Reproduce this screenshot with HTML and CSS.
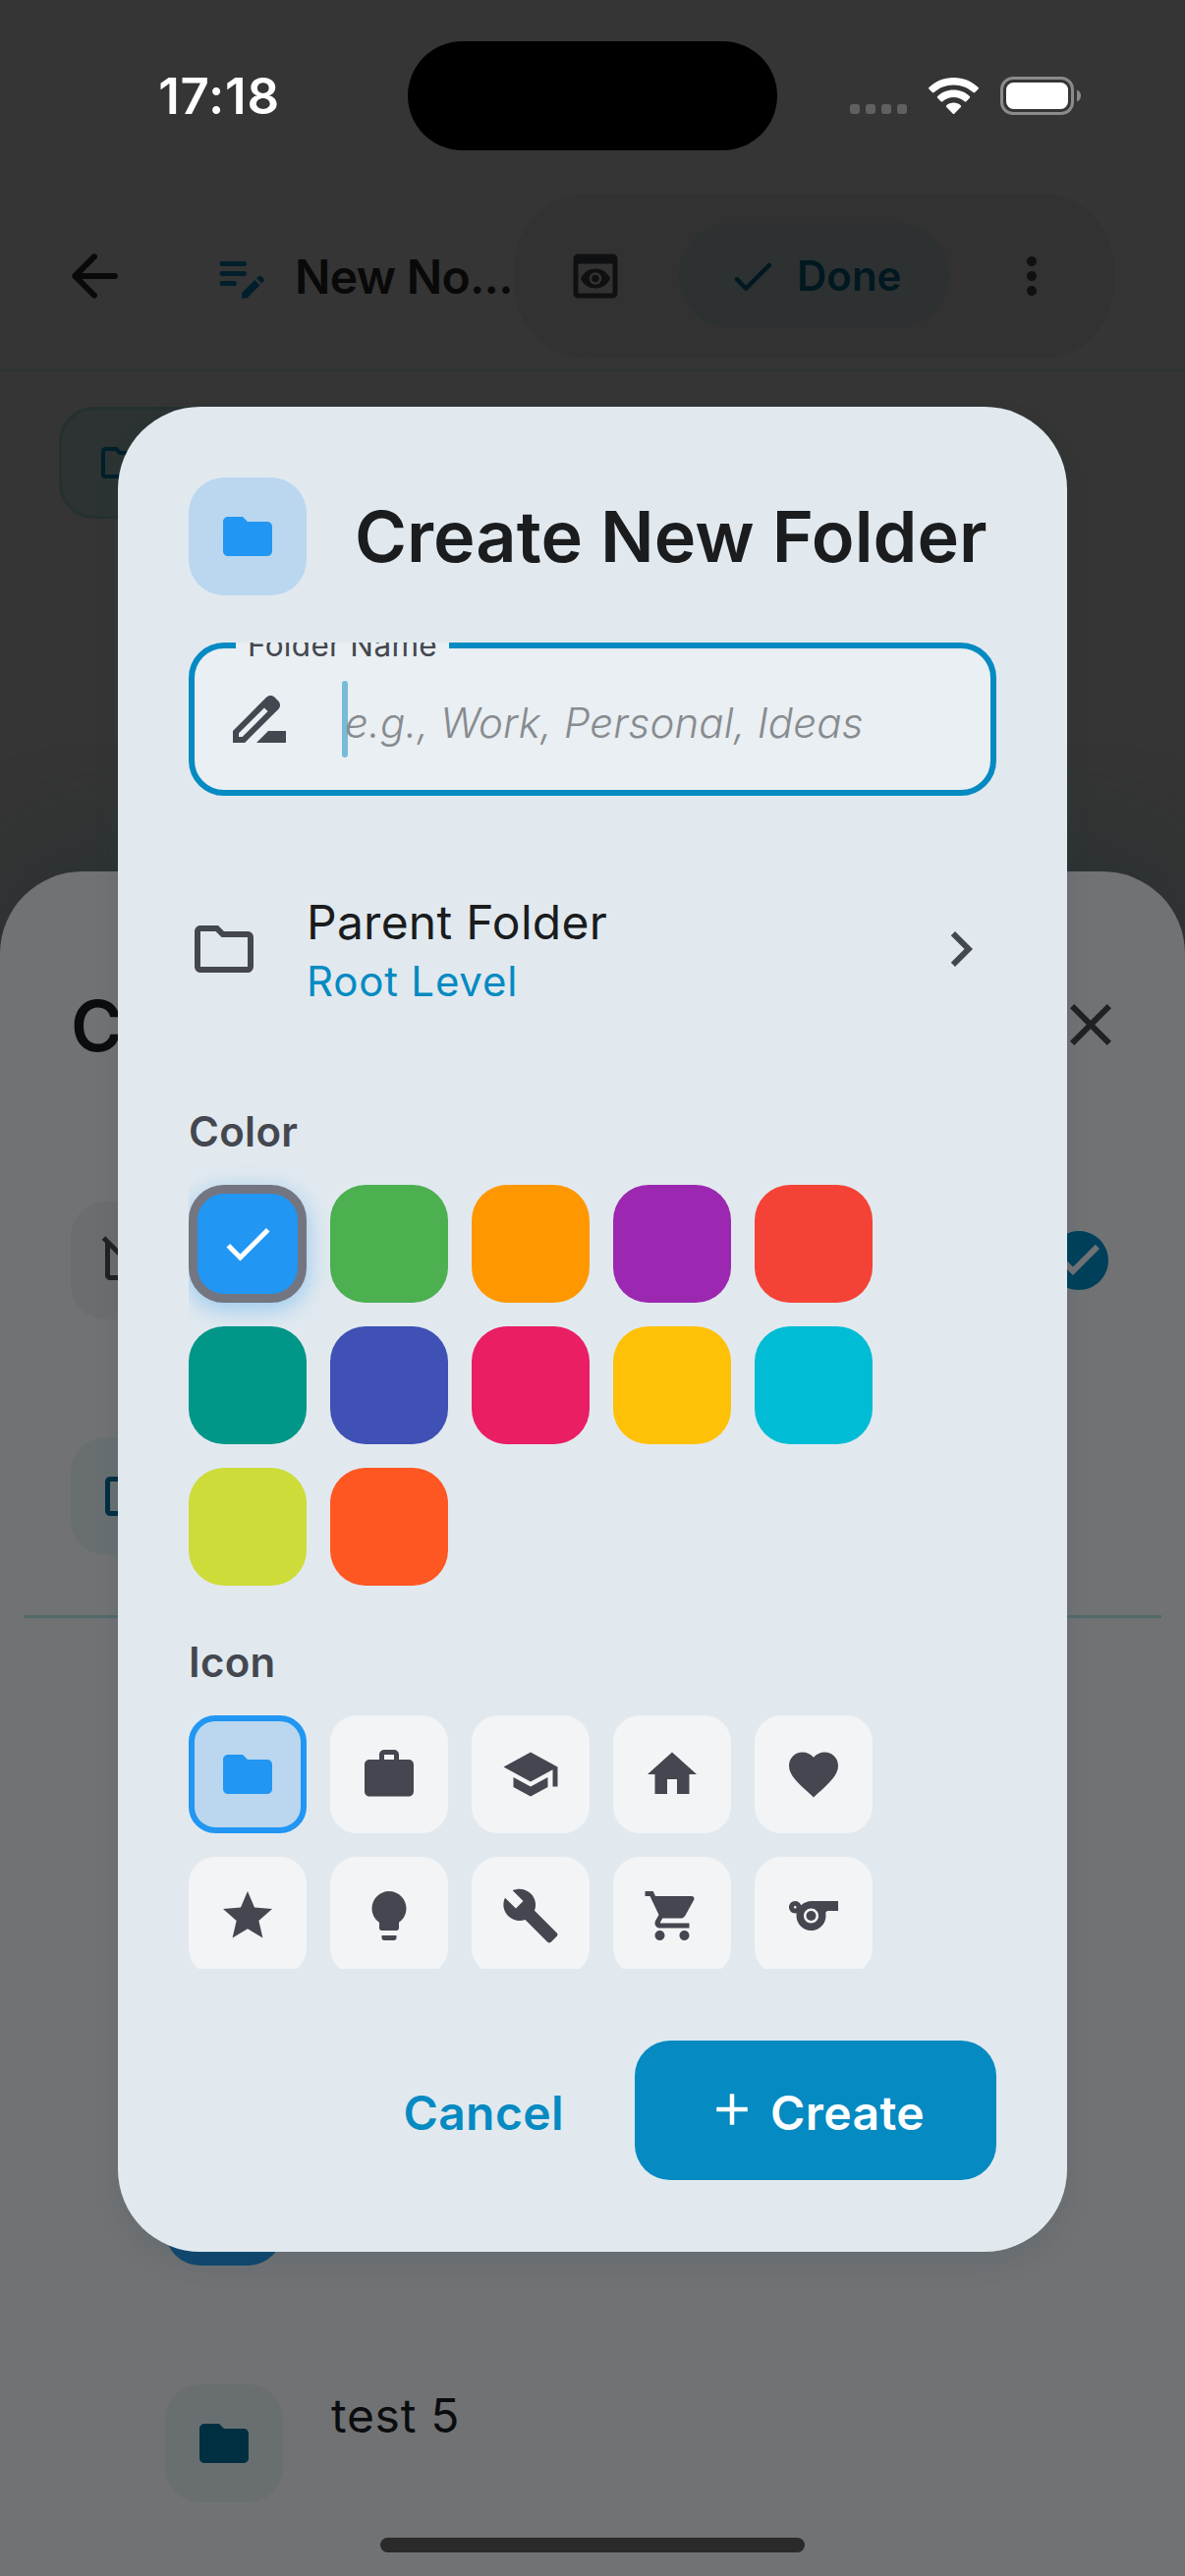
FILE: index.html
```html
<!DOCTYPE html>
<html lang="en">
<head>
<meta charset="utf-8">
<title>Create New Folder</title>
<link rel="stylesheet" href="styles.css">
</head>
<body>
<svg class="defs" aria-hidden="true">
  <symbol id="folder" viewBox="0 0 24 24"><path d="M10 4H4c-1.1 0-1.99.9-1.99 2L2 18c0 1.1.9 2 2 2h16c1.1 0 2-.9 2-2V8c0-1.1-.9-2-2-2h-8l-2-2z"/></symbol>
  <symbol id="folder-outline" viewBox="0 0 24 24"><path d="m9.17 6 2 2H20v10H4V6h5.17M10 4H4c-1.1 0-1.99.9-1.99 2L2 18c0 1.1.9 2 2 2h16c1.1 0 2-.9 2-2V8c0-1.1-.9-2-2-2h-8l-2-2z"/></symbol>
  <symbol id="check" viewBox="0 0 24 24"><path d="M9 16.17 4.83 12l-1.42 1.41L9 19 21 7l-1.41-1.41z"/></symbol>
</svg>

<div class="screen">
  <header class="status-bar">
    <div class="time">17:18</div>
    <div class="island"></div>
    <div class="indicators">
      <div class="cell-dots"><i></i><i></i><i></i><i></i></div>
      <svg class="wifi" viewBox="0 0 51 37"><path d="M25.5 0C35.300 0 44 3.700 50.400 9.800c.7.700.7 1.300.1 1.900l-3.300 3.300c-.6.600-1.200.6-1.800 0C40.200 10.200 33.200 7.400 25.500 7.400S10.800 10.200 5.600 15c-.6.600-1.200.6-1.800 0L.5 11.700c-.6-.6-.6-1.200.1-1.900C7 3.700 15.700 0 25.500 0z"/><path d="M25.500 12.600c6.400 0 12.100 2.400 16.300 6.400.6.600.6 1.200 0 1.800l-3.400 3.400c-.6.600-1.100.6-1.700.1-3-2.700-6.900-4.300-11.200-4.300s-8.200 1.600-11.200 4.300c-.6.500-1.100.5-1.700-.1l-3.400-3.400c-.6-.6-.6-1.200 0-1.800 4.200-4 9.900-6.400 16.300-6.400z"/><path d="M25.500 25.500c2.800 0 5.300 1 7.200 2.700.6.500.6 1.200.1 1.700l-6.300 6.500c-.7.700-1.300.7-2 0l-6.300-6.500c-.5-.5-.5-1.200.1-1.700 1.900-1.700 4.400-2.700 7.200-2.700z"/></svg>
      <svg class="battery" viewBox="0 0 82 39"><rect x="1.500" y="1.500" width="72" height="36" rx="11.500" fill="none" stroke="#8a8b8a" stroke-width="3"/><rect x="6" y="6" width="63" height="27" rx="7.500"/><path fill="#8a8b8a" d="M78 13.500c2.400 1 4 3.300 4 6s-1.600 5-4 6z"/></svg>
    </div>
  </header>

  <div class="app-bar">
    <svg class="icon-72 back" viewBox="0 0 24 24"><path d="M19 11H7.830l4.880-4.880c.39-.39.39-1.030 0-1.420-.39-.39-1.020-.39-1.410 0l-6.590 6.590c-.39.39-.39 1.020 0 1.410l6.590 6.590c.39.39 1.020.39 1.410 0 .39-.39.39-1.020 0-1.410L7.830 13H19c.55 0 1-.45 1-1s-.45-1-1-1z"/></svg>
    <svg class="icon-60 note" viewBox="0 0 24 24"><path d="M14 11c0 .55-.45 1-1 1H4c-.55 0-1-.45-1-1s.45-1 1-1h9c.55 0 1 .45 1 1zM3 7c0 .55.45 1 1 1h9c.55 0 1-.45 1-1s-.45-1-1-1H4c-.55 0-1 .45-1 1zm7 8c0-.55-.45-1-1-1H4c-.55 0-1 .45-1 1s.45 1 1 1h5c.55 0 1-.45 1-1zm8.010-2.130.71-.71c.39-.39 1.020-.39 1.410 0l.71.71c.39.39.39 1.020 0 1.410l-.71.71-2.120-2.120zm-.71.71-5.160 5.160c-.09.09-.14.21-.14.35v1.410c0 .28.22.5.5.500h1.410c.13 0 .26-.05.35-.15l5.160-5.160-2.120-2.110z"/></svg>
    <div class="note-title">New No...</div>
    <div class="tools">
      <svg class="icon-60" viewBox="0 0 24 24"><path d="M19 3H5c-1.110 0-2 .9-2 2v14c0 1.100.89 2 2 2h14c1.100 0 2-.9 2-2V5c0-1.100-.9-2-2-2zm0 16H5V7h14v12zm-5.500-6c0 .83-.67 1.500-1.500 1.500s-1.500-.67-1.500-1.500.67-1.500 1.500-1.500 1.500.67 1.500 1.500zM12 9c-2.730 0-5.060 1.660-6 4 .94 2.340 3.270 4 6 4s5.060-1.660 6-4c-.94-2.340-3.270-4-6-4zm0 6.500c-1.380 0-2.500-1.120-2.500-2.500s1.120-2.500 2.500-2.500 2.500 1.120 2.500 2.500-1.120 2.500-2.500 2.500z"/></svg>
      <div class="done">
        <svg class="icon-54" viewBox="0 0 24 24"><path d="M9 16.170 5.530 12.700c-.39-.39-1.020-.39-1.410 0-.39.39-.39 1.020 0 1.410l4.180 4.180c.39.39 1.020.39 1.410 0L20.290 7.710c.39-.39.39-1.020 0-1.410-.39-.39-1.020-.39-1.410 0L9 16.170z"/></svg>
        <span>Done</span>
      </div>
      <svg class="icon-60" viewBox="0 0 24 24"><path d="M12 8c1.100 0 2-.9 2-2s-.9-2-2-2-2 .9-2 2 .9 2 2 2zm0 2c-1.100 0-2 .9-2 2s.9 2 2 2 2-.9 2-2-.9-2-2-2zm0 6c-1.100 0-2 .9-2 2s.9 2 2 2 2-.9 2-2-.9-2-2-2z"/></svg>
    </div>
  </div>

  <div class="folder-chip"><svg class="icon-48"><use href="#folder-outline"/></svg></div>

  <section class="sheet">
    <div class="sheet-head">
      <h2>C</h2>
      <svg class="icon-72" viewBox="0 0 24 24"><path d="M19 6.410 17.590 5 12 10.590 6.410 5 5 6.410 10.590 12 5 17.590 6.410 19 12 13.410 17.590 19 19 17.590 13.410 12z"/></svg>
    </div>
    <div class="sheet-row">
      <div class="tile tile-plain"><svg class="icon-60" viewBox="0 0 24 24"><path d="M20 6h-8l-2-2H7.170l4 4H20v8.830l1.910 1.910c.06-.24.09-.48.09-.74V8c0-1.100-.9-2-2-2zM2.100 2.100.69 3.510 2 4.820V18c0 1.100.9 2 2 2h13.170l3.310 3.310 1.410-1.410L2.100 2.100zM4 18V6.830L15.170 18H4z"/></svg></div>
      <svg class="icon-72 picked" viewBox="0 0 24 24"><path d="M12 2C6.480 2 2 6.480 2 12s4.480 10 10 10 10-4.480 10-10S17.520 2 12 2zm-2 15-5-5 1.410-1.410L10 14.170l7.590-7.590L19 8l-9 9z"/></svg>
    </div>
    <div class="sheet-row">
      <div class="tile tile-tint"><svg class="icon-60"><use href="#folder-outline"/></svg></div>
    </div>
    <hr class="divider">
    <div class="folder-list">
      <div class="folder-item"><div class="tile tile-blue"></div></div>
      <div class="folder-item"><div class="tile tile-tint"><svg class="icon-60"><use href="#folder"/></svg></div><span>test 5</span></div>
    </div>
    <div class="home-indicator"></div>
  </section>

  <section class="dialog">
    <div class="dialog-head">
      <div class="tile tile-selected"><svg class="icon-60"><use href="#folder"/></svg></div>
      <h1>Create New Folder</h1>
    </div>
    <div class="dialog-body">
      <div class="field">
        <div class="field-label">Folder Name</div>
        <svg class="icon-72" viewBox="0 0 24 24"><path d="M18.410 5.800 17.200 4.590c-.78-.78-2.050-.78-2.830 0l-2.680 2.680L3 15.960V20h4.040l8.740-8.740 2.630-2.630c.79-.78.79-2.050 0-2.830zM6.210 18H5v-1.210l8.660-8.660 1.210 1.210L6.210 18zM11 20l4-4h6v4H11z"/></svg>
        <div class="caret"></div>
        <div class="hint">e.g., Work, Personal, Ideas</div>
      </div>
      <div class="parent">
        <svg class="icon-72"><use href="#folder-outline"/></svg>
        <div class="parent-text">
          <div class="parent-title">Parent Folder</div>
          <div class="parent-value">Root Level</div>
        </div>
        <svg class="icon-72" viewBox="0 0 24 24"><path d="M10 6 8.590 7.410 13.170 12l-4.580 4.590L10 18l6-6z"/></svg>
      </div>
      <h3>Color</h3>
      <div class="grid swatches">
        <div class="swatch blue"><svg class="icon-60"><use href="#check"/></svg></div>
        <div class="swatch green"></div>
        <div class="swatch orange"></div>
        <div class="swatch purple"></div>
        <div class="swatch red"></div>
        <div class="swatch teal"></div>
        <div class="swatch indigo"></div>
        <div class="swatch pink"></div>
        <div class="swatch amber"></div>
        <div class="swatch cyan"></div>
        <div class="swatch lime"></div>
        <div class="swatch deep-orange"></div>
      </div>
      <h3>Icon</h3>
      <div class="grid">
        <div class="choice chosen"><svg class="icon-60"><use href="#folder"/></svg></div>
        <div class="choice"><svg class="icon-60" viewBox="0 0 24 24"><path fill-rule="evenodd" d="M20 6h-4V4c0-1.110-.89-2-2-2h-4c-1.110 0-2 .89-2 2v2H4c-1.110 0-2 .89-2 2v11c0 1.110.89 2 2 2h16c1.110 0 2-.89 2-2V8c0-1.110-.89-2-2-2zm-6 0h-4V4h4v2z"/></svg></div>
        <div class="choice"><svg class="icon-60" viewBox="0 0 24 24"><path d="M5 13.180v4L12 21l7-3.820v-4L12 17l-7-3.820zM12 3 1 9l11 6 9-4.910V17h2V9L12 3z"/></svg></div>
        <div class="choice"><svg class="icon-60" viewBox="0 0 24 24"><path d="M10 20v-6h4v6h5v-8h3L12 3 2 12h3v8z"/></svg></div>
        <div class="choice"><svg class="icon-60" viewBox="0 0 24 24"><path d="m12 21.350-1.450-1.320C5.400 15.360 2 12.280 2 8.500 2 5.420 4.420 3 7.500 3c1.740 0 3.410.81 4.500 2.090C13.090 3.810 14.760 3 16.500 3 19.580 3 22 5.420 22 8.500c0 3.780-3.400 6.860-8.550 11.540L12 21.350z"/></svg></div>
        <div class="choice"><svg class="icon-60" viewBox="0 0 24 24"><path d="M12 17.270 18.180 21l-1.640-7.030L22 9.240l-7.190-.61L12 2 9.190 8.630 2 9.240l5.460 4.730L5.820 21z"/></svg></div>
        <div class="choice"><svg class="icon-60" viewBox="0 0 24 24"><path d="M9 21c0 .55.45 1 1 1h4c.55 0 1-.45 1-1v-1H9v1zm3-19C8.140 2 5 5.140 5 9c0 2.380 1.190 4.470 3 5.740V17c0 .55.45 1 1 1h6c.55 0 1-.45 1-1v-2.260c1.810-1.270 3-3.360 3-5.740 0-3.860-3.140-7-7-7z"/></svg></div>
        <div class="choice"><svg class="icon-60" viewBox="0 0 24 24"><path d="m22.700 19-9.100-9.100c.9-2.300.4-5-1.500-6.900-2-2-5-2.400-7.400-1.300L9 6 6 9 1.600 4.700C.4 7.100.9 10.100 2.900 12.100c1.900 1.900 4.600 2.400 6.900 1.500l9.100 9.100c.4.400 1 .4 1.400 0l2.300-2.300c.5-.4.5-1.100.1-1.400z"/></svg></div>
        <div class="choice"><svg class="icon-60" viewBox="0 0 24 24"><path d="M7 18c-1.100 0-1.990.9-1.990 2S5.900 22 7 22s2-.9 2-2-.9-2-2-2zM1 2v2h2l3.600 7.590-1.350 2.450c-.16.28-.25.61-.25.960 0 1.100.9 2 2 2h12v-2H7.420c-.14 0-.25-.11-.25-.25l.03-.12.9-1.630h7.450c.75 0 1.410-.41 1.750-1.030l3.580-6.490c.08-.14.12-.31.12-.480 0-.55-.45-1-1-1H5.210l-.94-2H1zm16 16c-1.100 0-1.990.9-1.990 2s.89 2 1.990 2 2-.9 2-2-.9-2-2-2z"/></svg></div>
        <div class="choice"><svg class="icon-60" viewBox="0 0 24 24"><path fill-rule="evenodd" d="M11.230 6c-1.660 0-3.220.66-4.360 1.730C6.540 6.730 5.610 6 4.500 6 3.120 6 2 7.120 2 8.500S3.120 11 4.500 11c.21 0 .41-.03.61-.08-.05.25-.09.51-.1.780-.18 3.680 2.950 6.680 6.680 6.270 2.550-.28 4.680-2.260 5.190-4.770.15-.71.15-1.400.06-2.060-.09-.6.38-1.130.99-1.130H22V6H11.230zM4.500 9c-.28 0-.5-.22-.5-.5s.22-.5.5-.5.5.22.5.500-.22.5-.5.500zm6.500 6c-1.660 0-3-1.340-3-3s1.340-3 3-3 3 1.340 3 3-1.340 3-3 3z"/><circle cx="11" cy="12" r="2"/></svg></div>
      </div>
    </div>
    <div class="actions">
      <div class="cancel">Cancel</div>
      <div class="create"><svg class="icon-54" viewBox="0 0 24 24"><path d="M19 13h-6v6h-2v-6H5v-2h6V5h2v6h6v2z"/></svg><span>Create</span></div>
    </div>
  </section>
</div>
</body>
</html>
```

FILE: styles.css
```css
* { box-sizing: border-box; }

body {
  margin: 0;
  font-family: Inter, "Noto Sans", sans-serif;
  background: #343534;
}

h1, h2, h3 { margin: 0; font-weight: 600; }
svg { display: block; fill: currentColor; flex: none; }
.defs { position: absolute; width: 0; height: 0; }

.icon-48 { width: 48px; height: 48px; }
.icon-54 { width: 54px; height: 54px; }
.icon-60 { width: 60px; height: 60px; }
.icon-72 { width: 72px; height: 72px; }

.screen {
  position: relative;
  width: 1206px;
  height: 2622px;
  overflow: hidden;
  background: #343534;
}

/* Status bar */
.status-bar {
  display: grid;
  grid-template-columns: 415px 376px 415px;
  align-items: center;
  height: 177px;
  padding-top: 17px;
  color: #fff;
}
.time {
  padding: 2px 0 0 31px;
  text-align: center;
  font-size: 51px;
  font-weight: 600;
  letter-spacing: .8px;
  line-height: 62px;
}
.island { height: 111px; border-radius: 56px; background: #000; }
.indicators { display: flex; align-items: center; padding-left: 74px; }
.cell-dots { display: flex; gap: 6px; margin: 27px 22px 0 0; }
.cell-dots i { width: 10px; height: 10px; border-radius: 3px; background: #5f605f; }
.wifi { width: 51px; height: 37px; margin-right: 22px; }
.battery { width: 82px; height: 39px; }

/* App bar */
.app-bar {
  display: flex;
  align-items: center;
  height: 201px;
  padding: 8px 0 0 60px;
  border-bottom: 2px solid #2e3434;
  color: #090909;
}
.back { margin-right: 84px; }
.note { margin-right: 24px; color: #011f2b; }
.note-title {
  width: 223px;
  padding-top: 2px;
  white-space: nowrap;
  font-size: 48px;
  font-weight: 600;
  letter-spacing: -.7px;
}
.tools {
  display: flex;
  align-items: center;
  width: 611px;
  height: 168px;
  padding-left: 53px;
  border-radius: 76px;
  background: #333232;
  color: #0f1012;
}
.done {
  display: flex;
  align-items: center;
  gap: 18px;
  width: 275px;
  height: 107px;
  margin: 0 54px 0 55px;
  padding-left: 48px;
  border-radius: 54px;
  background: #2d3132;
  color: #011820;
  font-size: 42px;
  font-weight: 600;
}

.folder-chip {
  display: flex;
  align-items: center;
  width: 400px;
  height: 114px;
  margin: 36px 0 0 60px;
  padding-left: 36px;
  border: 3px solid #253030;
  border-radius: 36px;
  background: #2c3332;
  color: #011f2b;
}

/* Bottom sheet behind the dialog */
.sheet {
  position: absolute;
  inset: 887px 0 0 0;
  display: flex;
  flex-direction: column;
  padding: 96px 72px 0;
  border-radius: 84px 84px 0 0;
  background: #717274;
  box-shadow: 0 -24px 90px 0 rgba(36, 46, 52, .6);
  color: #0b0c0e;
}
.sheet-head {
  display: flex;
  align-items: center;
  justify-content: space-between;
  height: 120px;
  color: #0b0c0e;
}
.sheet-head h2 { font-size: 72px; }
.sheet-head svg { margin-right: -12px; color: #1f2124; }
.sheet-row {
  display: flex;
  align-items: center;
  justify-content: space-between;
  height: 120px;
  margin-top: 120px;
}
.tile {
  display: grid;
  place-items: center;
  flex: none;
  width: 120px;
  height: 120px;
  border-radius: 36px;
}
.tile-plain { background: #6c6d6e; color: #1f2124; }
.tile-tint { background: #696f71; color: #012f42; }
.tile-blue { background: #10476f; }
.tile-selected { background: #bad7ef; color: #2196f3; }
.picked { color: #01405a; }
.divider {
  width: 1158px;
  height: 3px;
  margin: 61px -48px 0;
  border: 0;
  background: #506a68;
}
.folder-list {
  display: flex;
  flex-direction: column;
  gap: 121px;
  padding: 539px 0 0 96px;
}
.folder-item {
  display: flex;
  gap: 49px;
  font-size: 48px;
  line-height: 64px;
  letter-spacing: .7px;
}
.home-indicator {
  align-self: center;
  width: 432px;
  height: 15px;
  margin-top: 36px;
  border-radius: 8px;
  background: #2a2a2a;
}

/* Dialog */
.dialog {
  position: absolute;
  left: 120px;
  top: 414px;
  display: flex;
  flex-direction: column;
  width: 966px;
  height: 1878px;
  padding: 72px;
  border-radius: 84px;
  background: #e1e9ef;
  box-shadow: 0 12px 24px rgba(30, 80, 90, .13);
  color: #44474f;
}
.dialog-head {
  display: flex;
  align-items: center;
  gap: 49px;
  margin-bottom: 48px;
}
.dialog-head h1 {
  white-space: nowrap;
  font-size: 72px;
  line-height: 98px;
  color: #1a1c1e;
}
.dialog-body {
  flex: none;
  height: 1350px;
  overflow: hidden;
}

.field {
  position: relative;
  display: flex;
  align-items: center;
  height: 156px;
  padding-left: 30px;
  border: 6px solid #058ac2;
  border-radius: 36px;
  background: #e9eff2;
}
.field-label {
  position: absolute;
  left: 42px;
  top: -23px;
  width: 217px;
  height: 40px;
  background: #e9eff2;
  text-align: center;
  white-space: nowrap;
  font-size: 31.5px;
  line-height: 40px;
  letter-spacing: .3px;
}
.caret {
  width: 6px;
  height: 78px;
  margin-left: 48px;
  border-radius: 3px;
  background: #78bbd8;
}
.hint {
  margin: 6px 0 0 -3px;
  white-space: nowrap;
  font-size: 42px;
  font-style: italic;
  font-weight: 300;
  letter-spacing: .15px;
  color: #888b8f;
}

.parent {
  display: flex;
  align-items: center;
  gap: 48px;
  height: 216px;
  margin: 48px 0;
}
.parent-text { flex: 1; padding-top: 5px; line-height: 60px; }
.parent-title { font-size: 48px; letter-spacing: .25px; color: #1a1c1e; }
.parent-value { font-size: 42px; letter-spacing: .8px; color: #058ac2; }

.dialog-body h3 {
  margin-bottom: 24px;
  font-size: 42px;
  line-height: 60px;
  letter-spacing: .3px;
}
.grid {
  display: grid;
  grid-template-columns: repeat(5, 120px);
  gap: 24px;
}
.swatches { margin-bottom: 48px; }
.swatch, .choice {
  display: grid;
  place-items: center;
  height: 120px;
  border-radius: 36px;
}
.choice { border-radius: 27px; background: #f2f4f6; }
.chosen { border: 6px solid #2196f3; background: #bad7ef; color: #2196f3; }

.blue {
  border: 9px solid #737680;
  background: #2196f3;
  box-shadow: 0 6px 24px rgba(33, 150, 243, .4);
  color: #fff;
}
.green { background: #4caf50; }
.orange { background: #ff9800; }
.purple { background: #9c27b0; }
.red { background: #f44336; }
.teal { background: #009688; }
.indigo { background: #3f51b5; }
.pink { background: #e91e63; }
.amber { background: #ffc107; }
.cyan { background: #00bcd4; }
.lime { background: #cddc39; }
.deep-orange { background: #ff5722; }

.actions {
  display: flex;
  justify-content: flex-end;
  align-items: center;
  margin-top: 73px;
  font-size: 48px;
  font-weight: 600;
  letter-spacing: .4px;
}
.cancel { padding: 4px 72px 0; color: #058ac2; }
.create {
  display: flex;
  align-items: center;
  gap: 12px;
  width: 368px;
  height: 142px;
  padding-left: 72px;
  border-radius: 36px;
  background: #058ac2;
  color: #fff;
}
.create svg { margin-top: -3px; }
.create span { padding-top: 4px; }
```
